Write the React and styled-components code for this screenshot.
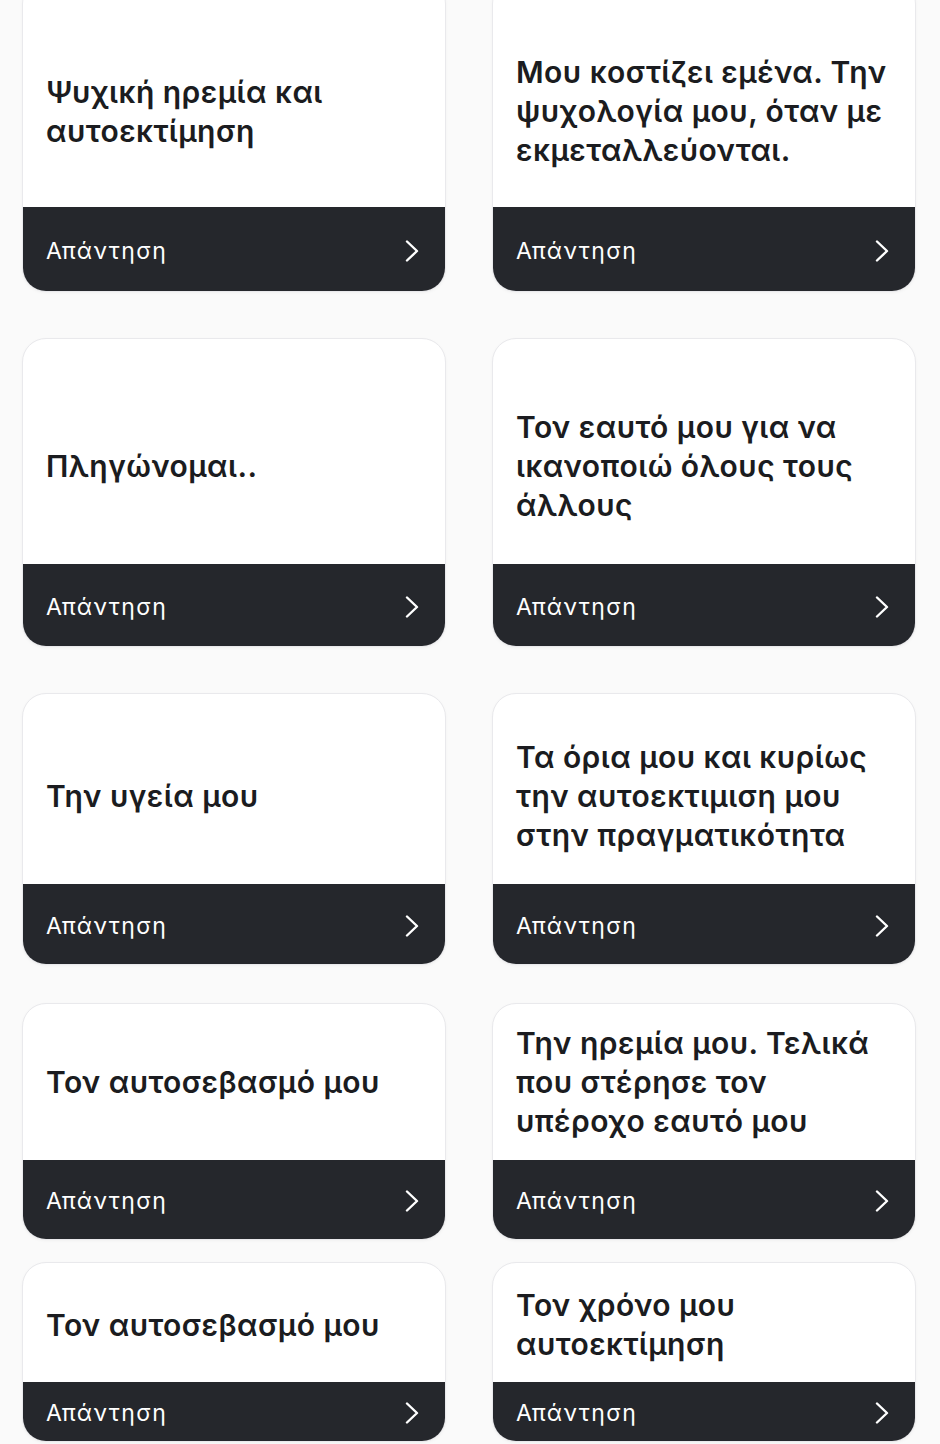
import React from "react";
import styled, { createGlobalStyle } from "styled-components";

const Global = createGlobalStyle`
  html, body { margin: 0; padding: 0; background: #fafafa; }
  body { font-family: Inter, "Noto Sans", "DejaVu Sans", sans-serif; -webkit-font-smoothing: antialiased; }
  * { box-sizing: border-box; }
`;

const Page = styled.div`
  width: 940px;
  height: 1444px;
  overflow: hidden;
  padding: 0 24px 0 22px;
  background: #fafafa;
`;

const Row = styled.div`
  display: grid;
  grid-template-columns: 1fr 1fr;
  column-gap: 46px;
  margin-top: ${(p) => p.$gap}px;
`;

const Card = styled.div`
  display: flex;
  flex-direction: column;
  background: #ffffff;
  border: 1px solid #e9e9ec;
  border-radius: 24px;
  overflow: hidden;
  box-shadow: 0 1px 3px rgba(0, 0, 0, 0.04);
`;

const Body = styled.div`
  height: ${(p) => p.$h}px;
  display: flex;
  align-items: center;
  padding: ${(p) => p.$shift}px 16px 0 23px;
`;

const Title = styled.div`
  font-size: 30px;
  line-height: 39px;
  font-weight: 600;
  color: #1b1c20;
  letter-spacing: 0.45px;
  white-space: nowrap;
`;

const Footer = styled.div`
  height: ${(p) => p.$h}px;
  background: #25272c;
  display: flex;
  align-items: center;
  justify-content: space-between;
  padding: 3px 26px 0 23px;
`;

const FooterLabel = styled.span`
  color: #ffffff;
  font-size: 23px;
  font-weight: 400;
  letter-spacing: 1.4px;
`;

const Chevron = () => (
  <svg width="14" height="22" viewBox="0 0 14 22" fill="none">
    <path d="M2 1.5 L12 11 L2 20.5" stroke="#ffffff" strokeWidth="2.4" strokeLinecap="round" strokeLinejoin="round" />
  </svg>
);

const rows = [
  {
    gap: -20, body: 226, foot: 84, shift: 35,
    cards: [
      ["Ψυχική ηρεμία και", "αυτοεκτίμηση"],
      ["Μου κοστίζει εμένα. Την", "ψυχολογία μου, όταν με", "εκμεταλλεύονται."],
    ],
  },
  {
    gap: 46, body: 225, foot: 82, shift: 30,
    cards: [
      ["Πληγώνομαι.."],
      ["Τον εαυτό μου για να", "ικανοποιώ όλους τους", "άλλους"],
    ],
  },
  {
    gap: 46, body: 190, foot: 80, shift: 15,
    cards: [
      ["Την υγεία μου"],
      ["Τα όρια μου και κυρίως", "την αυτοεκτιμιση μου", "στην πραγματικότητα"],
    ],
  },
  {
    gap: 38, body: 156, foot: 79, shift: 0,
    cards: [
      ["Τον αυτοσεβασμό μου"],
      ["Την ηρεμία μου. Τελικά", "που στέρησε τον", "υπέροχο εαυτό μου"],
    ],
  },
  {
    gap: 22, body: 119, foot: 59, shift: 5,
    cards: [
      ["Τον αυτοσεβασμό μου"],
      ["Τον χρόνο μου", "αυτοεκτίμηση"],
    ],
  },
];

function AnswerCard({ lines, bodyH, footH, shift }) {
  return (
    <Card>
      <Body $h={bodyH} $shift={shift}>
        <Title>
          {lines.map((l, i) => (
            <React.Fragment key={i}>
              {i > 0 && <br />}
              {l}
            </React.Fragment>
          ))}
        </Title>
      </Body>
      <Footer $h={footH}>
        <FooterLabel>Απάντηση</FooterLabel>
        <Chevron />
      </Footer>
    </Card>
  );
}

export default function App() {
  return (
    <>
      <Global />
      <Page>
        {rows.map((r, i) => (
          <Row key={i} $gap={r.gap}>
            {r.cards.map((lines, j) => (
              <AnswerCard key={j} lines={lines} bodyH={r.body} footH={r.foot} shift={r.shift} />
            ))}
          </Row>
        ))}
      </Page>
    </>
  );
}
